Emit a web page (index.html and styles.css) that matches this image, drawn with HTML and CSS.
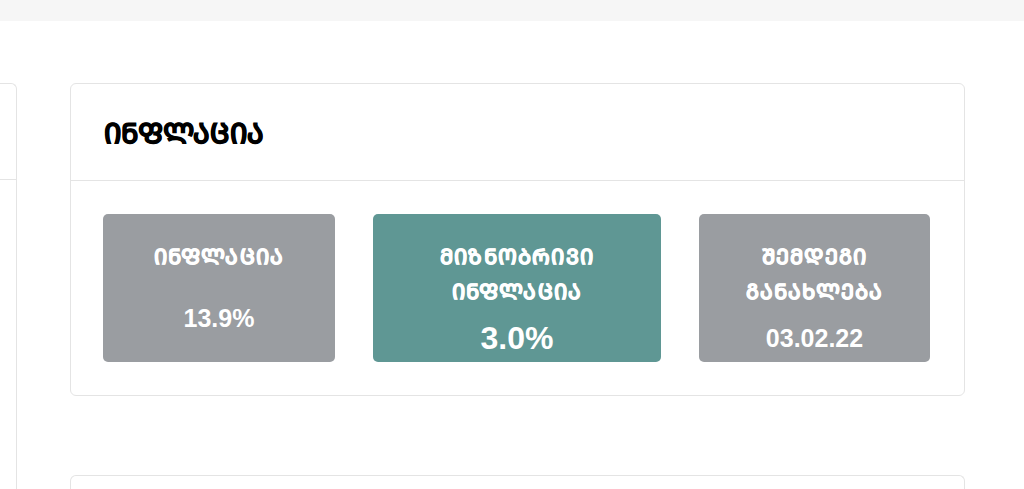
FILE: index.html
```html
<!DOCTYPE html>
<html lang="ka">
<head>
<meta charset="utf-8">
<title>ინფლაცია</title>
<link rel="stylesheet" href="styles.css">
</head>
<body>
<div class="topbar"></div>
<div class="content">
  <aside class="side-card">
    <div class="side-head"></div>
    <div class="side-body"></div>
  </aside>
  <main class="main-col">
    <section class="card">
      <header class="card-head">
        <h2 class="card-title">ᲘᲜᲤᲚᲐᲪᲘᲐ</h2>
      </header>
      <div class="card-body">
        <div class="stat stat--gray stat--single">
          <div class="stat-label">ᲘᲜᲤᲚᲐᲪᲘᲐ</div>
          <div class="stat-value">13.9%</div>
        </div>
        <div class="stat stat--teal">
          <div class="stat-label">ᲛᲘᲖᲜᲝᲑᲠᲘᲕᲘ<br>ᲘᲜᲤᲚᲐᲪᲘᲐ</div>
          <div class="stat-value stat-value--big">3.0%</div>
        </div>
        <div class="stat stat--gray">
          <div class="stat-label">ᲨᲔᲛᲓᲔᲒᲘ<br>ᲒᲐᲜᲐᲮᲚᲔᲑᲐ</div>
          <div class="stat-value">03.02.22</div>
        </div>
      </div>
    </section>
    <section class="card card--next"></section>
  </main>
</div>
</body>
</html>
```

FILE: styles.css
```css
* { box-sizing: border-box; }
html, body { margin: 0; padding: 0; background: #ffffff; }
body {
  font-family: "Liberation Sans", "DejaVu Sans", sans-serif;
  width: 1024px;
  height: 489px;
  overflow: hidden;
}
.topbar {
  height: 21px;
  background: #f6f6f6;
}
.content {
  display: flex;
  align-items: flex-start;
  gap: 53px;
  padding-top: 62px;
}
.side-card {
  width: 100px;
  margin-left: -83px;
  height: 406px;
  border: 1px solid #e4e4e4;
  border-bottom: none;
  border-radius: 6px 6px 0 0;
}
.side-head {
  height: 96px;
  border-bottom: 1px solid #e4e4e4;
}
.main-col {
  width: 895px;
  display: flex;
  flex-direction: column;
  gap: 79px;
}
.card {
  border: 1px solid #e4e4e4;
  border-radius: 6px;
  background: #fff;
}
.card--next {
  height: 14px;
  border-bottom: none;
  border-radius: 6px 6px 0 0;
}
.card-head {
  height: 97px;
  border-bottom: 1px solid #e4e4e4;
  display: flex;
  align-items: center;
  padding-left: 33px;
}
.card-title {
  margin: 0;
  font-size: 27.5px;
  font-weight: bold;
  color: #000;
  -webkit-text-stroke: 0.9px #000;
  letter-spacing: 0.3px;
}
.card-body {
  display: grid;
  grid-template-columns: 232px 288px 231px;
  column-gap: 38px;
  padding: 33px 32px 33px 32px;
}
.stat {
  height: 148px;
  border-radius: 5px;
  color: #fff;
  text-align: center;
  padding-top: 25px;
  font-weight: bold;
}
.stat--gray { background: #9a9da1; }
.stat--teal { background: #5f9794; }
.stat-label {
  font-size: 21px;
  line-height: 35px;
  letter-spacing: 1.2px;
  -webkit-text-stroke: 0.7px #fff;
}
.stat-value {
  font-size: 25px;
  line-height: 40px;
  margin-top: 9px;
}
.stat--single .stat-value { margin-top: 24px; }
.stat-value--big { font-size: 32px; }
```
